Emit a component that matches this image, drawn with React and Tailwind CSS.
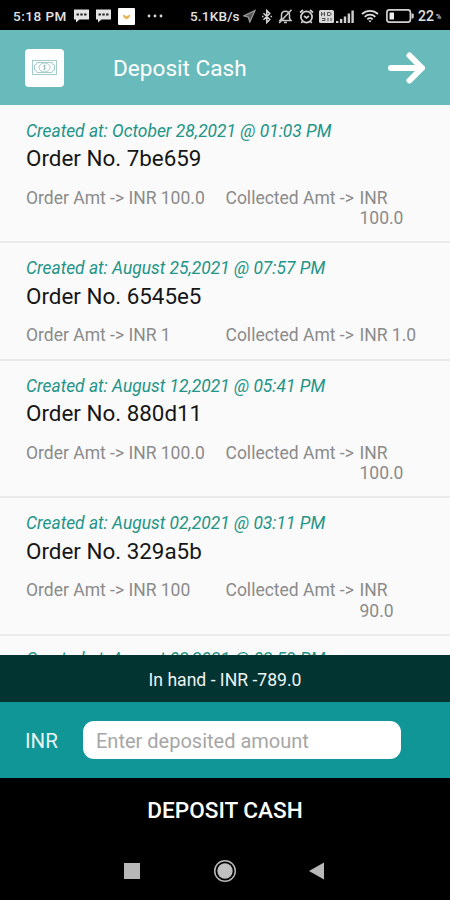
import React from 'react';

const orders = [
  { id: '7be659', created: 'October 28,2021 @ 01:03 PM', amount: 'INR 100.0', collected: 'INR 100.0' },
  { id: '6545e5', created: 'August 25,2021 @ 07:57 PM', amount: 'INR 1', collected: 'INR 1.0' },
  { id: '880d11', created: 'August 12,2021 @ 05:41 PM', amount: 'INR 100.0', collected: 'INR 100.0' },
  { id: '329a5b', created: 'August 02,2021 @ 03:11 PM', amount: 'INR 100', collected: 'INR 90.0' },
];

function MessageIcon() {
  return (
    <svg className="w-[15px] h-[14px] shrink-0" viewBox="0 0 15 14">
      <path d="M0 0.5h15v10H5.5L2 13.5v-3H0z" fill="#e4e4e4" />
      <path d="M2.5 5.5h2.4M6.3 5.5h2.4M10.1 5.5h2.4" stroke="#222" strokeWidth="1.8" />
    </svg>
  );
}

function StatusBar() {
  return (
    <div className="h-[30px] shrink-0 bg-black flex items-center pl-[13px] pt-[2px] text-[#e2e2e2] text-[13.5px] font-medium whitespace-nowrap">
      <span className="w-[61px] shrink-0 tracking-[0.5px]">5:18 PM</span>
      <MessageIcon />
      <span className="w-[7px] shrink-0" />
      <MessageIcon />
      <svg className="w-[17px] h-[17px] ml-[7px] shrink-0" viewBox="0 0 17 17">
        <rect width="17" height="17" rx="1" fill="#fff" />
        <path d="M4.5 6.5l4 1.6 4-1.6-1.2 3.3-2.8 1.7-2.8-1.7z" fill="#e6b95c" />
      </svg>
      <svg className="w-[16px] h-[4px] ml-[12px] shrink-0" viewBox="0 0 16 4" fill="#d8d8d8">
        <circle cx="2" cy="2" r="1.4" />
        <circle cx="8" cy="2" r="1.4" />
        <circle cx="14" cy="2" r="1.4" />
      </svg>
      <span className="ml-[27px] w-[53px] shrink-0 tracking-[0.2px]">5.1KB/s</span>
      <svg className="w-[13px] h-[14px] shrink-0" viewBox="0 0 13 14">
        <path d="M12 1.5L1 6.8l4.4 1.4L6.8 13z" fill="#555" stroke="#999" strokeWidth="1.3" />
      </svg>
      <svg className="w-[10px] h-[15px] ml-[6px] shrink-0" viewBox="0 0 10 15" fill="none" stroke="#d4d4d4" strokeWidth="1.5">
        <path d="M1.5 4.2l6.3 6.3-3 3V1.5l3 3-6.3 6.3M0 7.5h1.5M8.5 7.5H10" />
      </svg>
      <svg className="w-[15px] h-[15px] ml-[6px] shrink-0" viewBox="0 0 15 15" fill="none" stroke="#c8c8c8" strokeWidth="1.5">
        <path d="M2 11.5h11l-1.5-2V6C11.5 3.5 9.7 2.2 7.5 2.2S3.5 3.5 3.5 6v3.5zM6 13.5h3M13.5 0.8L1.2 14" />
      </svg>
      <svg className="w-[15px] h-[15px] ml-[6px] shrink-0" viewBox="0 0 15 15" fill="none" stroke="#d0d0d0" strokeWidth="1.7">
        <circle cx="7.5" cy="8" r="5.6" />
        <path d="M1 3.5L4 1M14 3.5L11 1M5 7l2.5 2L10 7M3.5 12.5L2.3 14M11.5 12.5l1.2 1.5" />
      </svg>
      <svg className="w-[15px] h-[13px] ml-[5px] shrink-0" viewBox="0 0 15 13">
        <rect width="15" height="13" rx="1.5" fill="#d8d8d8" />
        <path d="M2.5 2v4M5.5 2v4M2.5 4h3M8.5 2.5h2.5l1.3 1.5L11 5.5H8.5zM3 8.5h3v2H3M9 8v3M12 8v3" fill="none" stroke="#444" strokeWidth="0.9" />
      </svg>
      <svg className="w-[18px] h-[13px] ml-[2px] shrink-0" viewBox="0 0 18 13" fill="#cfcfcf">
        <path d="M0 11h2.4v2H0zM3.9 9h2.4v4H3.9zM7.8 6.5h2.4V13H7.8zM11.7 3.5h2.4V13h-2.4zM15.4 0.5h2.4V13h-2.4z" />
      </svg>
      <svg className="w-[18px] h-[14px] ml-[7px] shrink-0" viewBox="0 0 18 14" fill="none" stroke="#dadada" strokeWidth="1.8">
        <path d="M1 5C5.5 0.7 12.5 0.7 17 5M3.7 7.8c3-2.8 7.6-2.8 10.6 0M6.3 10.3c1.5-1.5 3.9-1.5 5.4 0" />
        <path d="M7.3 11.5h3.4L9 13.5z" fill="#dadada" stroke="none" />
      </svg>
      <svg className="w-[28px] h-[14px] ml-[7px] shrink-0" viewBox="0 0 28 14">
        <rect x="0.9" y="0.9" width="23.5" height="12.2" rx="2.5" fill="none" stroke="#d2d2d2" strokeWidth="1.7" />
        <rect x="3.5" y="3.5" width="4.5" height="7" rx="0.5" fill="#f0f0f0" />
        <path d="M25.5 4.5h1.2q1 0 1 1v3q0 1-1 1h-1.2z" fill="#d2d2d2" />
      </svg>
      <span className="ml-[4px] w-[18px] shrink-0 text-[14px]">22</span>
      <span className="text-[7px] pt-[3px]">%</span>
    </div>
  );
}

function Header() {
  return (
    <header className="h-[75px] shrink-0 bg-[#68bbba] flex items-center pl-[25px] pr-[24px]">
      <div className="w-[39px] h-[38px] rounded-[4px] bg-white flex items-center justify-center">
        <svg className="w-[25px] h-[15px]" viewBox="0 0 25 15" fill="none" stroke="#a3cccb" strokeWidth="1">
          <rect x="0.5" y="0.5" width="24" height="14" />
          <path d="M5 2.5h15a2.5 2.5 0 0 0 2.5 2.5v5a2.5 2.5 0 0 0-2.5 2.5H5A2.5 2.5 0 0 0 2.5 10V5A2.5 2.5 0 0 0 5 2.5z" />
          <ellipse cx="12.5" cy="7.5" rx="5.5" ry="4.5" />
          <path d="M13.8 5.8c-2.5-1-3.2 1-1.3 1.6s1.2 2.8-1.4 1.7M12.5 4.5v6" />
        </svg>
      </div>
      <h1 className="ml-[49px] pt-[2px] flex-1 text-[22.6px] text-white">Deposit Cash</h1>
      <svg className="w-[39px] h-[34px]" viewBox="0 0 39 34" fill="none" stroke="#fff" strokeWidth="6" strokeLinecap="round" strokeLinejoin="round">
        <path d="M4 17h31M22.5 4.5L35 17 22.5 29.5" />
      </svg>
    </header>
  );
}

function CreatedAt({ children }) {
  return (
    <p className="text-[17.4px] leading-[22px] italic text-[#229488] whitespace-nowrap">Created at: {children}</p>
  );
}

function OrderRow({ order }) {
  return (
    <li className="pl-[26px] pt-[14px] pb-[13px] border-b-2 border-[#ebebeb]">
      <CreatedAt>{order.created}</CreatedAt>
      <h2 className="mt-[3.4px] text-[22.4px] leading-[26px] text-[#161616]">Order No. {order.id}</h2>
      <div className="mt-[16.7px] flex text-[17.5px] leading-[20.3px] text-[#8b8b8b]">
        <p className="w-[199.5px] whitespace-nowrap">Order Amt -&gt; {order.amount}</p>
        <p className="w-[134px] whitespace-nowrap">Collected Amt -&gt;</p>
        <p className="w-[62px]">{order.collected}</p>
      </div>
    </li>
  );
}

export default function App() {
  return (
    <div className="w-[450px] h-[900px] flex flex-col overflow-hidden bg-black font-['Roboto',sans-serif]">
      <StatusBar />
      <Header />
      <ul className="h-[550px] shrink-0 pt-[0.6px] overflow-hidden bg-[#fafafa]">
        {orders.map(order => (
          <OrderRow key={order.id} order={order} />
        ))}
        <li className="pl-[26px] pt-[12px]">
          <CreatedAt>August 02,2021 @ 02:59 PM</CreatedAt>
        </li>
      </ul>
      <div className="h-[47px] shrink-0 bg-[#023432] flex items-center justify-center pt-[4px] text-[17.6px] text-[#edf3f3]">
        In hand - INR -789.0
      </div>
      <div className="h-[76px] shrink-0 bg-[#109696] flex items-center pl-[25px]">
        <label htmlFor="amount" className="w-[58px] pt-[3px] text-[20.5px] text-[#e4f4f4]">INR</label>
        <input
          id="amount"
          placeholder="Enter deposited amount"
          className="w-[318px] h-[38px] rounded-[11px] bg-white pl-[13px] pt-[2px] text-[20px] placeholder:text-[#a6a6a6] outline-none"
        />
      </div>
      <button className="h-[64px] shrink-0 pt-[2px] text-[22.6px] font-medium text-white">DEPOSIT CASH</button>
      <nav className="h-[58px] shrink-0 flex justify-center items-center gap-[70px]">
        <svg className="w-[22px] h-[22px]" viewBox="0 0 22 22">
          <rect x="3" y="3" width="16" height="16" fill="#b8b8b8" />
        </svg>
        <svg className="w-[24px] h-[24px]" viewBox="0 0 24 24">
          <circle cx="12" cy="12" r="10.3" fill="none" stroke="#b8b8b8" strokeWidth="1.5" />
          <circle cx="12" cy="12" r="7.7" fill="#c0c0c0" />
        </svg>
        <svg className="w-[22px] h-[22px]" viewBox="0 0 22 22">
          <path d="M2 11L17 2.5v17z" fill="#b8b8b8" />
        </svg>
      </nav>
    </div>
  );
}
